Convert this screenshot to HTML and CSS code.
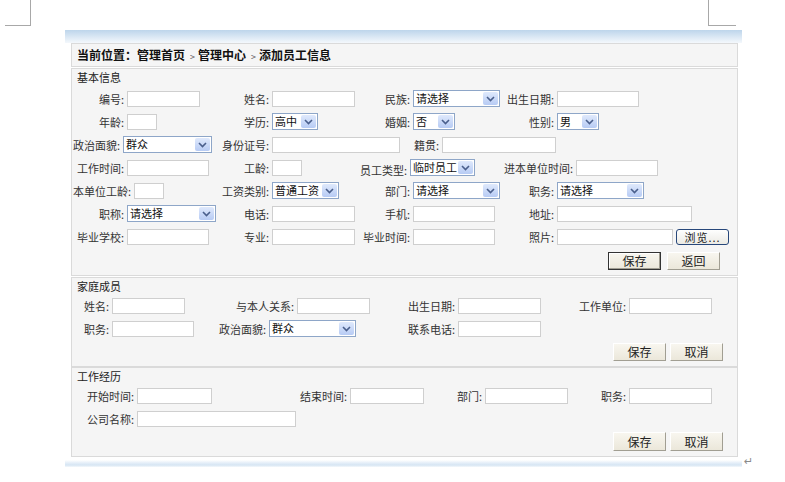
FILE: index.html
```html
<!DOCTYPE html>
<html lang="zh-CN">
<head>
<meta charset="utf-8">
<title>添加员工信息</title>
<link rel="stylesheet" href="styles.css">
</head>
<body>
<div class="marks"><span class="mark mark-l"></span><span class="mark mark-r"></span></div>
<div class="docrow">
  <div class="doc">
    <div class="topband"></div>
    <div class="crumb">当前位置：管理首页<span class="sep">&gt;</span>管理中心<span class="sep">&gt;</span>添加员工信息</div>

    <div class="sec sec1">
      <div class="title">基本信息</div>
      <div class="row">
        <label class="lb l55">编号:</label><input class="in c73" type="text">
        <label class="lb l72">姓名:</label><input class="in c83" type="text">
        <label class="lb l58">民族:</label><div class="sel c87"><span class="v">请选择</span><span class="ar"><svg width="9" height="6" viewBox="0 0 9 6"><path d="M1 1 L4.5 4.5 L8 1" fill="none" stroke="#4a5f8c" stroke-width="1.6"/></svg></span></div>
        <label class="lb l57">出生日期:</label><input class="in c82" type="text">
      </div>
      <div class="row">
        <label class="lb l55">年龄:</label><input class="in c30" type="text">
        <label class="lb l115">学历:</label><div class="sel c46"><span class="v">高中</span><span class="ar"><svg width="9" height="6" viewBox="0 0 9 6"><path d="M1 1 L4.5 4.5 L8 1" fill="none" stroke="#4a5f8c" stroke-width="1.6"/></svg></span></div>
        <label class="lb l95">婚姻:</label><div class="sel c42"><span class="v">否</span><span class="ar"><svg width="9" height="6" viewBox="0 0 9 6"><path d="M1 1 L4.5 4.5 L8 1" fill="none" stroke="#4a5f8c" stroke-width="1.6"/></svg></span></div>
        <label class="lb l102">性别:</label><div class="sel c42"><span class="v">男</span><span class="ar"><svg width="9" height="6" viewBox="0 0 9 6"><path d="M1 1 L4.5 4.5 L8 1" fill="none" stroke="#4a5f8c" stroke-width="1.6"/></svg></span></div>
      </div>
      <div class="row">
        <label class="lb l51">政治面貌:</label><div class="sel c89"><span class="v">群众</span><span class="ar"><svg width="9" height="6" viewBox="0 0 9 6"><path d="M1 1 L4.5 4.5 L8 1" fill="none" stroke="#4a5f8c" stroke-width="1.6"/></svg></span></div>
        <label class="lb l60">身份证号:</label><input class="in c128" type="text">
        <label class="lb l42">籍贯:</label><input class="in c114" type="text">
      </div>
      <div class="row">
        <label class="lb l55">工作时间:</label><input class="in c82" type="text">
        <label class="lb l63">工龄:</label><input class="in c30" type="text">
        <label class="lb l108 low">员工类型:</label><div class="sel c65"><span class="v">临时员工</span><span class="ar"><svg width="9" height="6" viewBox="0 0 9 6"><path d="M1 1 L4.5 4.5 L8 1" fill="none" stroke="#4a5f8c" stroke-width="1.6"/></svg></span></div>
        <label class="lb l101">进本单位时间:</label><input class="in c82" type="text">
      </div>
      <div class="row">
        <label class="lb l62">本单位工龄:</label><input class="in c30" type="text">
        <label class="lb l108">工资类别:</label><div class="sel c67"><span class="v">普通工资</span><span class="ar"><svg width="9" height="6" viewBox="0 0 9 6"><path d="M1 1 L4.5 4.5 L8 1" fill="none" stroke="#4a5f8c" stroke-width="1.6"/></svg></span></div>
        <label class="lb l74">部门:</label><div class="sel c87"><span class="v">请选择</span><span class="ar"><svg width="9" height="6" viewBox="0 0 9 6"><path d="M1 1 L4.5 4.5 L8 1" fill="none" stroke="#4a5f8c" stroke-width="1.6"/></svg></span></div>
        <label class="lb l57">职务:</label><div class="sel c87"><span class="v">请选择</span><span class="ar"><svg width="9" height="6" viewBox="0 0 9 6"><path d="M1 1 L4.5 4.5 L8 1" fill="none" stroke="#4a5f8c" stroke-width="1.6"/></svg></span></div>
      </div>
      <div class="row">
        <label class="lb l55">职称:</label><div class="sel c89"><span class="v">请选择</span><span class="ar"><svg width="9" height="6" viewBox="0 0 9 6"><path d="M1 1 L4.5 4.5 L8 1" fill="none" stroke="#4a5f8c" stroke-width="1.6"/></svg></span></div>
        <label class="lb l56">电话:</label><input class="in c83" type="text">
        <label class="lb l58">手机:</label><input class="in c82" type="text">
        <label class="lb l62">地址:</label><input class="in c135" type="text">
      </div>
      <div class="row">
        <label class="lb l55">毕业学校:</label><input class="in c82" type="text">
        <label class="lb l63">专业:</label><input class="in c83" type="text">
        <label class="lb l58">毕业时间:</label><input class="in c82" type="text">
        <label class="lb l62">照片:</label><input class="in c116" type="text"><button class="browse" type="button">浏览...</button>
      </div>
      <div class="btns">
        <button class="btn def" type="button">保存</button>
        <button class="btn" type="button">返回</button>
      </div>
    </div>

    <div class="sec sec2">
      <div class="title">家庭成员</div>
      <div class="row">
        <label class="lb l40">姓名:</label><input class="in c73" type="text">
        <label class="lb l112">与本人关系:</label><input class="in c73" type="text">
        <label class="lb l88">出生日期:</label><input class="in c83" type="text">
        <label class="lb l88">工作单位:</label><input class="in c83" type="text">
      </div>
      <div class="row">
        <label class="lb l40">职务:</label><input class="in c82" type="text">
        <label class="lb l75">政治面貌:</label><div class="sel c87"><span class="v">群众</span><span class="ar"><svg width="9" height="6" viewBox="0 0 9 6"><path d="M1 1 L4.5 4.5 L8 1" fill="none" stroke="#4a5f8c" stroke-width="1.6"/></svg></span></div>
        <label class="lb l102">联系电话:</label><input class="in c83" type="text">
      </div>
      <div class="btns">
        <button class="btn" type="button">保存</button>
        <button class="btn" type="button">取消</button>
      </div>
    </div>

    <div class="sec sec3">
      <div class="title">工作经历</div>
      <div class="row">
        <label class="lb l65">开始时间:</label><input class="in c75" type="text">
        <label class="lb l138">结束时间:</label><input class="in c74" type="text">
        <label class="lb l61">部门:</label><input class="in c83" type="text">
        <label class="lb l61">职务:</label><input class="in c83" type="text">
      </div>
      <div class="row">
        <label class="lb l65">公司名称:</label><input class="in c159" type="text">
      </div>
      <div class="btns">
        <button class="btn" type="button">保存</button>
        <button class="btn" type="button">取消</button>
      </div>
    </div>
    <div class="bottomband"></div>
  </div>
  <span class="ret">↵</span>
</div>
</body>
</html>
```

FILE: styles.css
```css
* { box-sizing: border-box; }
body {
  margin: 0;
  background: #fff;
  font-family: "Noto Sans CJK SC", "Liberation Sans", sans-serif;
  font-size: 11px;
  color: #333;
}
.marks { display: flex; height: 26px; }
.mark { display: block; height: 26px; border-bottom: 1px solid #a8a8a8; }
.mark-l { width: 26px; margin-left: 5px; border-right: 1px solid #a8a8a8; }
.mark-r { width: 28px; margin-left: 677px; border-left: 1px solid #a8a8a8; }

.docrow { display: flex; align-items: flex-end; margin-top: 4px; }
.doc { width: 677px; margin-left: 65px; flex: none; }
.topband { height: 13px; background: linear-gradient(#bdd5eb, #f4f8fc); }
.bottomband { height: 10px; background: linear-gradient(#fff 0, #fff 3px, #e4eef8 6px, #d6e5f3 8px, #f4f8fc 10px); }
.ret { font-family: "DejaVu Sans", sans-serif; font-size: 11px; color: #8a8a8a; line-height: 12px; margin-left: 2px; margin-bottom: -1px; }

.crumb, .sec {
  margin-left: 6px;
  width: 667px;
  background: #f5f5f5;
  border: 1px solid #dadada;
}
.crumb {
  height: 24px;
  padding-left: 5px;
  font-weight: bold;
  font-size: 12px;
  color: #111;
  line-height: 22px;
}
.crumb .sep { font-weight: normal; font-size: 9px; color: #555; margin: 0 3px 0 5px; }

.sec1 { margin-top: 1px; padding-bottom: 5px; }
.sec2 { margin-top: 1px; padding-bottom: 5px; }
.sec3 { margin-top: 0; padding-bottom: 5px; }

.title { height: 16px; line-height: 16px; padding-left: 5px; color: #222; font-size: 11px; }
.sec1 .title { margin-bottom: 2px; }

.row { display: flex; align-items: center; height: 23px; }
.lb { flex: none; text-align: right; padding-right: 3px; white-space: nowrap; line-height: 14px; color: #333; }
.lb.low { padding-top: 4px; }

.in {
  flex: none;
  height: 16px;
  margin: 0;
  padding: 0 2px;
  border: 1px solid #cfcfcf;
  background: #fff;
  font: inherit;
}
.sel {
  flex: none;
  display: flex;
  height: 17px;
  border: 1px solid #8ea6c8;
  background: #fff;
}
.sel .v { flex: 1; padding-left: 2px; line-height: 15px; color: #111; white-space: nowrap; overflow: hidden; }
.sel .ar {
  flex: none;
  width: 15px;
  margin: 1px;
  border-radius: 2px;
  background: linear-gradient(#dfe9fc, #b7cbf4);
  display: flex;
  align-items: center;
  justify-content: center;
}

.browse {
  flex: none;
  width: 53px;
  height: 16px;
  margin: 0 0 0 3px;
  padding: 0;
  border: 1px solid #27477a;
  border-radius: 3px;
  background: linear-gradient(#fefefe, #ebeae4);
  font: inherit;
  color: #222;
  line-height: 14px;
  letter-spacing: 1px;
}

.btns { display: flex; justify-content: flex-end; gap: 4px; padding-right: 14px; margin-top: 3px; }
.sec1 .btns { gap: 6px; padding-right: 17px; margin-top: 4px; }
.sec3 .btns { margin-top: 2px; }
.sec3 .btn { height: 19px; }
.btn {
  width: 53px;
  height: 18px;
  margin: 0;
  padding: 0;
  font: inherit;
  font-size: 12px;
  color: #222;
  line-height: 16px;
  background: linear-gradient(#f8f6ef, #ebe7da);
  border: 1px solid;
  border-color: #fff #a19e92 #a19e92 #fff;
}
.btn.def { border: 1px solid #333; box-shadow: inset -1px -1px #a19e92, inset 1px 1px #fff; }

.l40 { width: 40px; } .l42 { width: 42px; } .l51 { width: 51px; } .l55 { width: 55px; }
.l56 { width: 56px; } .l57 { width: 57px; } .l58 { width: 58px; } .l60 { width: 60px; }
.l61 { width: 61px; } .l62 { width: 62px; } .l63 { width: 63px; } .l65 { width: 65px; }
.l72 { width: 72px; } .l74 { width: 74px; } .l75 { width: 75px; } .l88 { width: 88px; }
.l95 { width: 95px; } .l101 { width: 101px; } .l102 { width: 102px; } .l108 { width: 108px; }
.l112 { width: 112px; } .l115 { width: 115px; } .l138 { width: 138px; }

.c30 { width: 30px; } .c42 { width: 42px; } .c46 { width: 46px; } .c65 { width: 65px; }
.c67 { width: 67px; } .c73 { width: 73px; } .c74 { width: 74px; } .c75 { width: 75px; }
.c82 { width: 82px; } .c83 { width: 83px; } .c87 { width: 87px; } .c89 { width: 89px; }
.c114 { width: 114px; } .c116 { width: 116px; } .c128 { width: 128px; } .c135 { width: 135px; }
.c159 { width: 159px; }
```
